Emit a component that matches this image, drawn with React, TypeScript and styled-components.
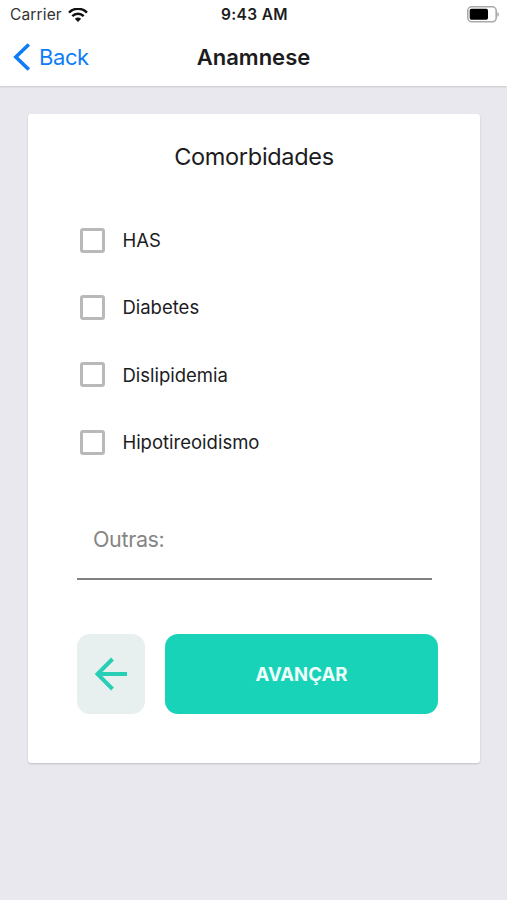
import React, { useState } from "react";
import styled, { createGlobalStyle } from "styled-components";

const GlobalStyle = createGlobalStyle`
  *, *::before, *::after { box-sizing: border-box; }
  body {
    margin: 0;
    background: #e8e8ee;
    font-family: Inter, "Liberation Sans", sans-serif;
    color: #1c1c1e;
  }
  button, input { font: inherit; }
`;

const Screen = styled.div`
  width: 100%;
  max-width: 507px;
  height: 900px;
  overflow: hidden;
  background: #e8e8ee;
`;

const Header = styled.header`
  height: 86px;
  background: #fff;
  box-shadow: 0 1px 2px rgba(0, 0, 0, 0.14);
`;

const StatusBar = styled.div`
  display: grid;
  grid-template-columns: 1fr auto 1fr;
  align-items: center;
  height: 30px;
  padding: 0 8px 0 10px;
  line-height: 30px;
`;

const Carrier = styled.div`
  display: flex;
  align-items: center;
  gap: 6px;
  font-size: 15.5px;
  letter-spacing: 0.15px;
  color: #333;
`;

const Clock = styled.div`
  font-size: 15.5px;
  font-weight: 600;
  letter-spacing: 0.35px;
`;

const BatterySlot = styled.div`
  display: flex;
  justify-content: flex-end;
  padding-bottom: 2px;
`;

const NavBar = styled.div`
  display: grid;
  grid-template-columns: 1fr auto 1fr;
  align-items: center;
  height: 54px;
  padding: 0 12px;
`;

const BackLink = styled.button`
  display: flex;
  align-items: center;
  gap: 8px;
  padding: 0;
  border: 0;
  background: none;
  color: #0f7cf6;
  font-size: 22px;
  line-height: 28px;
  letter-spacing: -0.4px;
`;

const NavTitle = styled.h1`
  margin: 0;
  font-size: 22px;
  line-height: 28px;
  font-weight: 600;
  letter-spacing: 0;
`;

const Card = styled.main`
  width: 452px;
  height: 649px;
  margin: 28px 0 0 28px;
  padding: 27px 42px 0 49px;
  border-radius: 3px;
  background: #fff;
  box-shadow: 0 1px 2px rgba(0, 0, 0, 0.18);
`;

const CardTitle = styled.h2`
  margin: 0 7px 0 0;
  font-size: 23.5px;
  line-height: 32px;
  font-weight: 400;
  letter-spacing: -0.3px;
  text-align: center;
`;

const Options = styled.div`
  display: flex;
  flex-direction: column;
  gap: 43.4px;
  margin: 55px 0 0 3px;
`;

const Option = styled.label`
  display: flex;
  align-items: center;
  gap: 17.4px;
  height: 24px;
  font-size: 18.5px;
  line-height: 24px;
`;

const Checkbox = styled.input`
  appearance: none;
  width: 25px;
  height: 25px;
  margin: 0;
  border: 2.5px solid #b9b9b9;
  border-width: 3px;
  border-radius: 3px;
  background: #fff;
  &:checked { background: #18d3b8; }
`;

const OtherField = styled.input`
  display: block;
  width: 355px;
  height: 76px;
  margin-top: 49.5px;
  padding: 0 16px 4px;
  border: 0;
  border-bottom: 2px solid #808080;
  border-radius: 0;
  outline: 0;
  background: none;
  font-size: 21.5px;
  letter-spacing: -0.35px;
  &::placeholder { color: #858585; opacity: 1; }
`;

const Actions = styled.div`
  display: grid;
  grid-template-columns: 68px 273px;
  gap: 20px;
  height: 80px;
  margin-top: 54px;
`;

const ActionButton = styled.button<{ $primary?: boolean }>`
  display: flex;
  align-items: center;
  justify-content: center;
  padding: 0;
  border: 0;
  border-radius: 13px;
  background: ${(p) => (p.$primary ? "#18d3b8" : "#e8efef")};
  color: ${(p) => (p.$primary ? "#effffb" : "#26cfb5")};
  font-size: 18.5px;
  font-weight: 700;
`;

const WifiIcon = () => (
  <svg width="20" height="15" viewBox="0 0 20 15" fill="none" stroke="#111" strokeWidth="2.5">
    <path d="M1 4.6C6 -.4 14 -.4 19 4.6" />
    <path d="M4.3 8.1C7.5 4.9 12.5 4.9 15.7 8.1" />
    <path d="M10 13.9L6.8 10.8Q10 8.2 13.2 10.8Z" fill="#111" stroke="none" />
  </svg>
);

const BatteryIcon = () => (
  <svg width="32" height="17" viewBox="0 0 32 17">
    <rect x="0.8" y="0.8" width="28.4" height="15" rx="4" fill="#fff" stroke="#aaa" strokeWidth="1.6" />
    <rect x="2.7" y="2.8" width="18.3" height="11" rx="1.7" fill="#000" />
    <path d="M30.3 6V10.8Q32 10 32 8.4Q32 6.8 30.3 6Z" fill="#aaa" />
  </svg>
);

const ChevronIcon = () => (
  <svg width="19" height="28" viewBox="0 0 19 28" fill="none" stroke="#0f7cf6" strokeWidth="3.6">
    <path d="M16.8 1.5L3.8 14L16.8 26.5" />
  </svg>
);

const ArrowIcon = () => (
  <svg width="34" height="34" viewBox="0 0 34 34" fill="none" stroke="currentColor" strokeWidth="3.9">
    <path d="M33 17H4M18.5 2L3.5 17L18.5 32" />
  </svg>
);

const comorbidities = ["HAS", "Diabetes", "Dislipidemia", "Hipotireoidismo"];

export default function App() {
  const [other, setOther] = useState("");
  return (
    <Screen>
      <GlobalStyle />
      <Header>
        <StatusBar>
          <Carrier>Carrier <WifiIcon /></Carrier>
          <Clock>9:43 AM</Clock>
          <BatterySlot><BatteryIcon /></BatterySlot>
        </StatusBar>
        <NavBar>
          <BackLink><ChevronIcon />Back</BackLink>
          <NavTitle>Anamnese</NavTitle>
        </NavBar>
      </Header>
      <Card>
        <CardTitle>Comorbidades</CardTitle>
        <Options>
          {comorbidities.map((name) => (
            <Option key={name}><Checkbox type="checkbox" />{name}</Option>
          ))}
        </Options>
        <OtherField placeholder="Outras:" value={other} onChange={(e) => setOther(e.target.value)} />
        <Actions>
          <ActionButton aria-label="Voltar"><ArrowIcon /></ActionButton>
          <ActionButton $primary>AVANÇAR</ActionButton>
        </Actions>
      </Card>
    </Screen>
  );
}
